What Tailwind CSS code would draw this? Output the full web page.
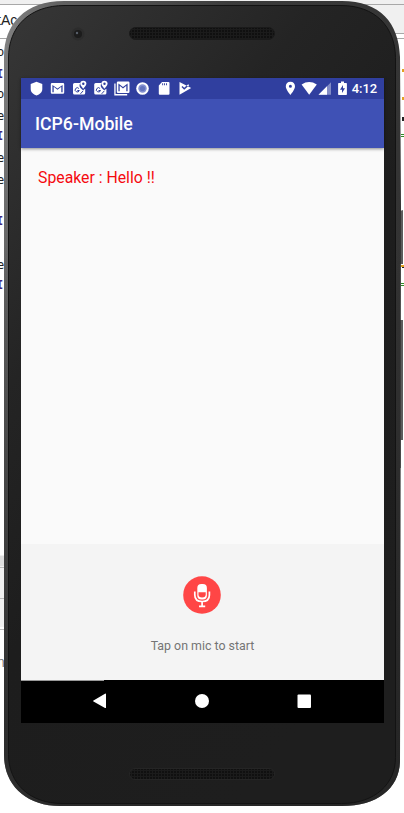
<!DOCTYPE html>
<html lang="en">
<head>
<meta charset="utf-8">
<title>ICP6-Mobile</title>
<script src="https://cdn.jsdelivr.net/npm/@tailwindcss/browser@4"></script>
</head>
<body class="relative h-[813px] w-[404px] overflow-hidden bg-white font-[Roboto,sans-serif]">
<!-- editor window behind the emulator -->
<svg class="absolute inset-0" width="404" height="813" viewBox="0 0 404 813">
  <path fill="#f0f0f0" d="M0 0h404v5H0zM340 5h64v28h-64zM0 555h8v72H0z"/>
  <path fill="#a8a8a8" d="M0 4h60v1H0zM340 4h64v1h-64zM0 38h20v1H0zM390 33h14v1h-14zM390 38h14v1h-14z"/>
  <path fill="#dedede" d="M0 556h8v10H0z"/>
  <path fill="#bcbcbc" d="M0 567h8v1H0zM0 598h8v1H0zM0 629h8v1H0z"/>
  <g font-family="Liberation Sans, sans-serif" font-size="14" fill="#222"><text x="-3" y="25">tAc</text><text x="-3" y="667" fill="#777">n</text></g>
  <g font-family="DejaVu Sans Mono, monospace" font-size="12" fill="#222">
    <text x="-3" y="56">o</text><text x="-3" y="98">o</text><text x="-3" y="120">e</text><text x="-3" y="162">e</text><text x="-3" y="184">e</text><text x="-3" y="269">e</text>
    <g fill="#43277f" font-weight="bold"><text x="-4" y="78">I</text><text x="-4" y="140">I</text><text x="-4" y="225">I</text><text x="-4" y="289">I</text></g>
  </g>
  <path fill="#e3a020" d="M402 69h2v3h-2zM402 97h2v3h-2zM401 265h3v2h-3z"/>
  <path fill="#222" d="M402 117h2v4h-2zM402 267h2v1h-2z"/>
  <path fill="#2d8a25" d="M401 134h3v1h-3zM401 136h3v1h-3zM401 283h3v1h-3zM401 285h3v1h-3z"/>
  <path fill="#5c5c5c" d="M400 211l3-1v54h-3zM400 320h3v120h-3z"/>
  <path fill="#777" d="M400 440h1v28h-1z"/>
</svg>
<!-- device body -->
<svg class="absolute inset-0" width="404" height="813" viewBox="0 0 404 813">
  <defs>
    <linearGradient id="body" x1="0" y1="0" x2=".6" y2="1"><stop stop-color="#373737"/><stop offset=".35" stop-color="#242424"/><stop offset=".6" stop-color="#1d1d1d"/><stop offset="1" stop-color="#1e1e1e"/></linearGradient>
    <linearGradient id="rim" x1="0" y1="0" x2="1" y2=".35"><stop stop-color="#858585"/><stop offset=".12" stop-color="#626262"/><stop offset=".5" stop-color="#3c3c3c"/><stop offset="1" stop-color="#333"/></linearGradient>
    <linearGradient id="shade" x1="0" y1="0" x2="0" y2="1"><stop offset=".3" stop-color="#222" stop-opacity="0"/><stop offset=".9" stop-color="#222" stop-opacity=".75"/></linearGradient>
    <pattern id="mesh" width="3" height="3" patternUnits="userSpaceOnUse"><path fill="#1b1b1b" d="M0 0h3v3H0z"/><path fill="#101010" d="M0 0h2v2H0z"/></pattern>
    <path id="shell" d="M4 57C4 24 25 1 64 1h278c38 0 57 22 58 56l1 150-1 553c0 28-22 46-58 46H60C26 806 4 785 4 755z"/>
  </defs>
  <use href="#shell" fill="url(#rim)"/><use href="#shell" fill="url(#shade)"/>
  <path fill="url(#body)" stroke="#131313" d="M8.500 58C8.500 27 29 5.500 65 5.500h276c34 0 54 21 54.500 52v700c0 26-20 46-54 46H62c-32 0-53.500-20-53.500-49z"/>
  <circle cx="78" cy="34" r="6.500" fill="#2c2c2c"/><circle cx="78" cy="34" r="4" fill="#1c1c1c"/><circle cx="77" cy="33" r="1.200" fill="#59606a"/>
  <rect x="129.500" y="27.500" width="145" height="12" rx="6" fill="url(#mesh)" stroke="#1a1a1a"/>
  <rect x="129.500" y="768.500" width="145" height="11" rx="5.500" fill="url(#mesh)" stroke="#252525"/>
</svg>
<main class="relative mt-[78px] ml-[21px] flex h-[645px] w-[363px] flex-col bg-[#fafafa]">
  <header class="relative z-10 flex h-[70px] shrink-0 flex-col bg-[#3f51b5] shadow-[0_1px_3px_rgba(0,0,0,.45)]">
    <div class="flex h-[21px] items-center justify-between bg-[#303f9f]">
      <svg width="174" height="21" viewBox="0 0 174 21" fill="#fff" fill-rule="evenodd">
        <path d="M15.500 3.700L21.300 6v5c0 3.200-2.500 5.400-5.800 6.600C12.200 16.400 9.700 14.200 9.700 11V6z"/>
        <path d="M31 5h11q1.200 0 1.200 1.200v8.300q0 1.200-1.200 1.200H31q-1.200 0-1.200-1.200V6.200Q29.800 5 31 5zm.4 2v7.300h1.300V8.700l3.800 3 3.800-3v5.600h1.300V7l-5.100 3.600z"/>
        <g id="maps">
          <path d="M53.500 5h5.800q-2.200 3.400 1.500 6.300l1.200 1 2.200-1.500V15q0 1.500-1.500 1.500h-9.200q-1.500 0-1.500-1.500V6.500q0-1.500 1.500-1.500z"/>
          <path d="M62.300 2.800c-2 0-3.100 1.200-3.100 2.800 0 2 3.100 5.200 3.100 5.200s3.100-3.200 3.100-5.200c0-1.600-1.200-2.800-3.100-2.800zm0 1.800a1.200 1.200 0 1 1 0 2.400 1.200 1.200 0 0 1 0-2.400z"/>
          <path fill="none" stroke="#303f9f" d="M57.900 10.500a2.100 2.100 0 1 0 .4 2h-2M59.500 15.800l2.700-3"/>
        </g>
        <use href="#maps" x="21.200"/>
        <path d="M97 3.500h10.300q1.200 0 1.200 1.200v9q0 1.200-1.200 1.200H97q-1.200 0-1.200-1.200v-9q0-1.200 1.200-1.200zm.4 2v7.800h1.300V7.800l3.300 2.700 3.300-2.700v5.500h1.300V5.500L102 9zM93.300 5.500h1.300V16h11.600v1.400H93.300z"/>
        <circle cx="121.500" cy="10.500" r="6.300"/><circle cx="121.500" cy="10.500" r="4.200" fill="#8490d0"/><circle cx="121.500" cy="10.500" r="2.600" fill="#6373bd"/>
        <path d="M141 4h6.500q1 0 1 1v10.700q0 1-1 1h-8.700q-1 0-1-1V7.500zm.2 1.300v2h.9v-2zm1.900 0v2h.9v-2zm1.900 0v2h.9v-2z"/>
        <path d="M158.500 4l11.700 6-11.700 6.700zM161.500 8l-1 1 2.700 2.700 5-4.500-1-1-4 3.500z"/>
      </svg>
      <div class="flex items-center pr-[7px]">
        <svg class="mr-[4px]" width="64" height="21" viewBox="283 0 64 21" fill="#fff" fill-rule="evenodd">
          <path d="M289.400 3.700c-2.800 0-4.600 2-4.600 4.500 0 3.500 4.600 8.700 4.600 8.700s4.600-5.200 4.600-8.700c0-2.500-1.800-4.500-4.600-4.500zm0 3a1.500 1.500 0 1 1 0 3 1.500 1.500 0 0 1 0-3z"/>
          <path d="M300.600 6.500q7.600-4.800 15.200 0L308.200 16.700z"/>
          <path fill-opacity=".4" d="M330 4.200v12.500h-12.500z"/><path d="M326 8.200v8.500h-8.500z"/>
          <path d="M340 3.500h3V5h2.200q.7 0 .7.700v10.500q0 .7-.7.700h-7.400q-.7 0-.7-.7V5.700q0-.7.700-.7h2.200zm2 3.500l-3 4.700h2v3.300l3-4.800h-2z"/>
        </svg>
        <span class="text-[13px] leading-[21px] font-medium tracking-[-0.1px] text-white">4:12</span>
      </div>
    </div>
    <h1 class="flex flex-1 items-center pl-[14px] text-[17.700px] font-medium text-white"><span class="block translate-y-px">ICP6-Mobile</span></h1>
  </header>
  <section class="flex-1 px-[17px] pt-[20px]"><p class="text-[15.800px] leading-[20px] text-[#f50a10]">Speaker : Hello !!</p></section>
  <section class="flex h-[136px] flex-col items-center bg-[#f4f4f4] pt-[32px]">
    <svg class="mr-[2px]" width="38" height="38" viewBox="0 0 38 38"><circle cx="19" cy="19" r="18.800" fill="#ff4646"/>
      <rect x="14.300" y="8" width="9.600" height="15.500" rx="4" fill="#fff"/>
      <path fill="#ff4646" d="M15.500 16.300h7.200v2.200q0 3-3.600 3t-3.600-3z"/>
      <path fill="none" stroke="#fff" stroke-width="1.700" d="M11.800 15.500V19c0 4.200 3 6.500 7.300 6.500s7.300-2.300 7.300-6.500v-3.500M19.100 25.500v4.500M16 30.300h6.200"/></svg>
    <p class="mt-[23px] text-[12.400px] leading-[18px] text-[#757575]">Tap on mic to start</p>
  </section>
  <nav class="h-[43px] bg-black">
    <svg width="363" height="43" viewBox="0 0 363 43" fill="#fff"><path fill="#999" d="M0 0h83v1H0z"/><path d="M72.500 20.400L84 13.700q1-.5 1 .5v13.200q0 1-1 .5l-11.500-6.300q-1-.6 0-1.200z"/><circle cx="181" cy="21" r="7"/><rect x="276.500" y="14.500" width="13.500" height="13.500" rx="1"/></svg>
  </nav>
</main>
</body>
</html>
